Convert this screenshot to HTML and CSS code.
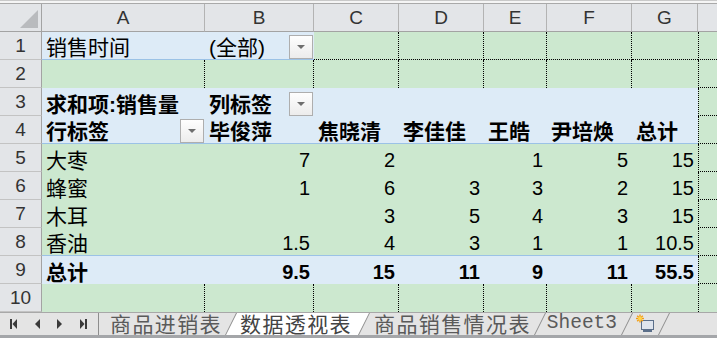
FILE: index.html
```html
<!DOCTYPE html>
<html lang="zh-CN">
<head>
<meta charset="utf-8">
<title>数据透视表</title>
<link rel="stylesheet" href="styles.css">
</head>
<body>
<div class="sheet">
  <div class="strip"></div>
  <div class="corner"><svg width="41" height="27" viewBox="0 0 41 27"><polygon points="38,6 38,24 20,24" fill="#b9bbbe"/></svg></div>
  <div class="ch">A</div>
  <div class="ch">B</div>
  <div class="ch">C</div>
  <div class="ch">D</div>
  <div class="ch">E</div>
  <div class="ch">F</div>
  <div class="ch">G</div>
  <div class="ch last"></div>

  <div class="rh">1</div>
  <div class="c b bb">销售时间</div>
  <div class="c b bb dd-cell"><span>(全部)</span><span class="dd"></span></div>
  <div class="c g dr db"></div>
  <div class="c g dr db"></div>
  <div class="c g dr db"></div>
  <div class="c g dr db"></div>
  <div class="c g db"></div>
  <div class="c g dl db"></div>

  <div class="rh">2</div>
  <div class="c g dr"></div>
  <div class="c g dr"></div>
  <div class="c g dr"></div>
  <div class="c g dr"></div>
  <div class="c g dr"></div>
  <div class="c g dr"></div>
  <div class="c g"></div>
  <div class="c g dl db"></div>

  <div class="rh">3</div>
  <div class="c b bold">求和项:销售量</div>
  <div class="c b bold dd-cell"><span>列标签</span><span class="dd"></span></div>
  <div class="c b"></div>
  <div class="c b"></div>
  <div class="c b"></div>
  <div class="c b"></div>
  <div class="c b"></div>
  <div class="c g dl db"></div>

  <div class="rh">4</div>
  <div class="c b bb bold dd-cell"><span>行标签</span><span class="dd"></span></div>
  <div class="c b bb bold">毕俊萍</div>
  <div class="c b bb bold">焦晓清</div>
  <div class="c b bb bold">李佳佳</div>
  <div class="c b bb bold">王皓</div>
  <div class="c b bb bold">尹培焕</div>
  <div class="c b bb bold">总计</div>
  <div class="c g dl db"></div>

  <div class="rh">5</div>
  <div class="c g">大枣</div>
  <div class="c g num">7</div>
  <div class="c g num">2</div>
  <div class="c g num"></div>
  <div class="c g num">1</div>
  <div class="c g num">5</div>
  <div class="c g num">15</div>
  <div class="c g dl db"></div>

  <div class="rh">6</div>
  <div class="c g">蜂蜜</div>
  <div class="c g num">1</div>
  <div class="c g num">6</div>
  <div class="c g num">3</div>
  <div class="c g num">3</div>
  <div class="c g num">2</div>
  <div class="c g num">15</div>
  <div class="c g dl db"></div>

  <div class="rh">7</div>
  <div class="c g">木耳</div>
  <div class="c g num"></div>
  <div class="c g num">3</div>
  <div class="c g num">5</div>
  <div class="c g num">4</div>
  <div class="c g num">3</div>
  <div class="c g num">15</div>
  <div class="c g dl db"></div>

  <div class="rh">8</div>
  <div class="c g bb">香油</div>
  <div class="c g bb num">1.5</div>
  <div class="c g bb num">4</div>
  <div class="c g bb num">3</div>
  <div class="c g bb num">1</div>
  <div class="c g bb num">1</div>
  <div class="c g bb num">10.5</div>
  <div class="c g dl db"></div>

  <div class="rh">9</div>
  <div class="c b bold">总计</div>
  <div class="c b bold num">9.5</div>
  <div class="c b bold num">15</div>
  <div class="c b bold num">11</div>
  <div class="c b bold num">9</div>
  <div class="c b bold num">11</div>
  <div class="c b bold num">55.5</div>
  <div class="c g dl db"></div>

  <div class="rh">10</div>
  <div class="c g dr"></div>
  <div class="c g dr"></div>
  <div class="c g dr"></div>
  <div class="c g dr"></div>
  <div class="c g dr"></div>
  <div class="c g dr"></div>
  <div class="c g"></div>
  <div class="c g dl"></div>
</div>

<div class="tabbar">
  <div class="nav">
    <svg width="98" height="22" viewBox="0 0 98 22">
      <g fill="#3a3a3a">
        <rect x="10" y="6" width="2" height="10"/>
        <polygon points="17,6 12.5,11 17,16"/>
        <polygon points="40,6 35,11 40,16"/>
        <polygon points="57,6 62,11 57,16"/>
        <polygon points="80,6 84.5,11 80,16"/>
        <rect x="85" y="6" width="2" height="10"/>
      </g>
    </svg>
  </div>
  <div class="tab first">商品进销表</div>
  <svg class="sep" width="12" height="22" viewBox="0 0 12 22"><polygon points="12,0 12,22 0,22" fill="#fff"/><line x1="0.5" y1="22" x2="11.5" y2="0" stroke="#8d8d8d"/></svg>
  <div class="tab active">数据透视表</div>
  <svg class="sep" width="12" height="22" viewBox="0 0 12 22"><polygon points="0,0 12,0 0,22" fill="#fff"/><line x1="0.5" y1="22" x2="11.5" y2="0" stroke="#8d8d8d"/></svg>
  <div class="tab t3">商品销售情况表</div>
  <svg class="sep" width="12" height="22" viewBox="0 0 12 22"><line x1="0.5" y1="22" x2="11.5" y2="0" stroke="#8d8d8d"/></svg>
  <div class="tab t4">Sheet3</div>
  <svg class="sep" width="12" height="22" viewBox="0 0 12 22"><line x1="0.5" y1="22" x2="11.5" y2="0" stroke="#8d8d8d"/></svg>
  <div class="tab ins">
    <svg width="20" height="20" viewBox="0 0 20 20">
      <rect x="6.5" y="6.5" width="12" height="9" fill="#dfe5ee" stroke="#5b6f8a"/>
      <rect x="8" y="16" width="9" height="2" fill="#5b6f8a"/>
      <g stroke="#f39c12" stroke-width="1.4">
        <line x1="5" y1="0.5" x2="5" y2="8.5"/>
        <line x1="1" y1="4.5" x2="9" y2="4.5"/>
        <line x1="2.2" y1="1.7" x2="7.8" y2="7.3"/>
        <line x1="7.8" y1="1.7" x2="2.2" y2="7.3"/>
      </g>
      <circle cx="5" cy="4.5" r="2" fill="#ffd54a"/>
    </svg>
  </div>
  <svg class="sep" width="12" height="22" viewBox="0 0 12 22"><line x1="0.5" y1="22" x2="11.5" y2="0" stroke="#8d8d8d"/></svg>
</div>
</body>
</html>
```

FILE: styles.css
```css
html, body {
  margin: 0;
  padding: 0;
  background: #e4e4e4;
  overflow: hidden;
}

.sheet {
  display: grid;
  grid-template-columns: 42px 163px 109px 85px 85px 63px 85px 66px 19px;
  grid-template-rows: 4px repeat(11, 28px);
  width: 717px;
  font-family: "Liberation Sans", "Noto Sans CJK SC", sans-serif;
}

.sheet > div {
  box-sizing: border-box;
}

.strip {
  grid-column: 1 / -1;
  background: #f5f5f5;
  border-top: 1px solid #c9c9c9;
  border-bottom: 1px solid #a9a9a9;
}

.corner {
  background: #e3e5e8;
  border-right: 1px solid #a3a3a3;
  border-bottom: 1px solid #a3a3a3;
}

.corner svg {
  display: block;
}

.ch {
  background: #e3e5e8;
  border-right: 1px solid #b3b3b3;
  border-bottom: 1px solid #a3a3a3;
  display: flex;
  align-items: center;
  justify-content: center;
  font-size: 19px;
  color: #333;
  padding-top: 1px;
}

.ch.last {
  border-right: none;
}

.rh {
  background: #e3e5e8;
  border-right: 1px solid #a3a3a3;
  border-bottom: 1px solid #c3c3c3;
  display: flex;
  align-items: center;
  justify-content: center;
  font-size: 19px;
  color: #333;
  padding-top: 1px;
}

.c {
  display: flex;
  align-items: flex-end;
  padding: 0 4px 0 4px;
  font-size: 21px;
  line-height: 23px;
  color: #000;
  white-space: nowrap;
  overflow: hidden;
}

.g { background: #cce8cf; }
.b { background: #ddebf7; }
.bb { border-bottom: 1px solid #9bc2e6; }
.dr { border-right: 1px dotted #000; }
.dl { border-left: 1px dotted #000; }
.db { border-bottom: 1px dotted #000; }

.bold { font-weight: bold; }

.num {
  justify-content: flex-end;
  font-size: 20px;
}

.dd-cell {
  justify-content: space-between;
  padding-right: 1px;
}

.dd {
  width: 24px;
  height: 24px;
  box-sizing: border-box;
  border: 1px solid #aeaeae;
  background: linear-gradient(#fefefe, #ececec);
  display: flex;
  align-items: center;
  justify-content: center;
  flex: none;
}

.dd::after {
  content: "";
  width: 0;
  height: 0;
  border-left: 4px solid transparent;
  border-right: 4px solid transparent;
  border-top: 4px solid #6e6e6e;
}

.tabbar {
  display: flex;
  align-items: flex-start;
  height: 26px;
  box-sizing: border-box;
  border-top: 1px solid #a8a8a8;
  border-bottom: 3px solid #a4a6a9;
  background: #e4e4e4;
}

.nav {
  width: 98px;
  height: 22px;
  flex: none;
}

.nav svg, .sep {
  display: block;
  flex: none;
}

.sep {
  position: relative;
  z-index: 1;
}

.tab {
  height: 22px;
  line-height: 21px;
  font-family: "Noto Sans CJK SC", sans-serif;
  font-size: 21px;
  letter-spacing: 1.4px;
  color: #5a5a5a;
  white-space: nowrap;
  flex: none;
  box-sizing: border-box;
}

.tab.first {
  border-left: 1px solid #8d8d8d;
  padding-left: 11px;
  padding-right: 3px;
}

.tab.active {
  background: #fff;
  color: #444;
  padding-left: 3px;
  padding-right: 6px;
}

.tab.t3 {
  padding-left: 4px;
  padding-right: 3px;
}

.tab.t4 {
  font-family: "Liberation Mono", monospace;
  font-size: 19.5px;
  letter-spacing: 0;
  padding-left: 1px;
  padding-right: 4px;
}

.tab.ins {
  padding-left: 2px;
  padding-right: 3px;
  display: flex;
  align-items: center;
}

.tab.ins svg {
  display: block;
}
```
